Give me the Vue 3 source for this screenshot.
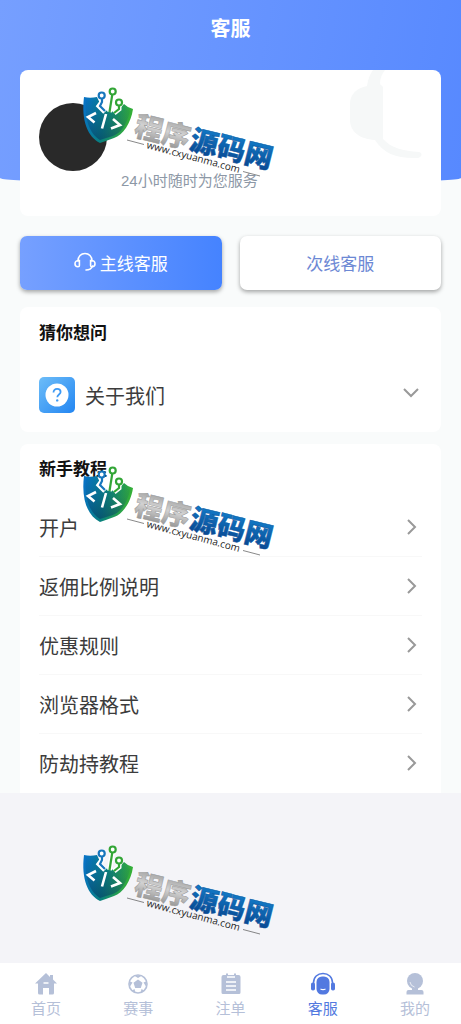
<template>
    <div class="page">
        <main class="main">
            <header class="header">
                <h1>客服</h1>
            </header>

            <div class="content">
                <section class="card service">
                    <div class="avatar"></div>
                    <p>24小时随时为您服务</p>
                    <svg class="service-bg" viewBox="0 0 76 92" aria-hidden="true">
                        <path d="M17 16C18 9 20 4 23 0h12c-3 4-5 8-5 14l3 3v52c8 9 20 12 36 13 4 1 3 5-1 6-20 1-34-4-43-18C9 69 0 61 0 50V34c0-10 7-16 17-18z" fill="#f6f8f8" />
                    </svg>
                </section>

                <div class="lines">
                    <button type="button" class="line primary">
                        <svg width="22" height="20" viewBox="0 0 22 20" fill="none" stroke="currentColor" stroke-width="1.6" stroke-linecap="round" aria-hidden="true">
                            <path d="M4 9C4 4.500 7 1.500 11 1.500S18 4.500 18 9M18.500 14c-1 2.500-3 4-6.500 4" />
                            <path d="M5 8.500c-2.500 0-4 1-4 3.200s1.300 3 3 3c1 0 1.400-.5 1.400-1.300V8.500zM17 8.500c2.500 0 4 1 4 3.200s-1.300 3-3 3c-1 0-1.400-.5-1.400-1.300V8.500z" />
                        </svg>
                        主线客服
                    </button>
                    <button type="button" class="line">次线客服</button>
                </div>

                <section class="card ask">
                    <h2>猜你想问</h2>
                    <button type="button" class="about" :aria-expanded="opened" @click="opened = !opened">
                        <svg class="about-icon" viewBox="0 0 36 36" aria-hidden="true">
                            <defs>
                                <linearGradient id="askFill" x1="0" y1="0" x2="1" y2="1">
                                    <stop offset="0" stop-color="#6dbdf8" />
                                    <stop offset="1" stop-color="#2386f2" />
                                </linearGradient>
                            </defs>
                            <rect width="36" height="36" rx="5" fill="url(#askFill)" />
                            <circle cx="18" cy="18" r="11.500" fill="#fff" />
                            <path d="M14.500 15.500c0-2.200 1.500-3.600 3.600-3.600s3.500 1.300 3.500 3.100c0 2.400-3.300 2.600-3.300 5.200" fill="none" stroke="#3d9af5" stroke-width="1.800" />
                            <circle cx="18.200" cy="23.400" r="1.200" fill="#3d9af5" />
                        </svg>
                        <span>关于我们</span>
                        <svg class="arrow" viewBox="0 0 20 20" aria-hidden="true">
                            <path d="M2 4l7 7 7-7" />
                        </svg>
                    </button>
                </section>

                <section class="card guide">
                    <h2>新手教程</h2>
                    <ul>
                        <li v-for="item in guides" :key="item">
                            <a href="#">
                                <span>{{ item }}</span>
                                <svg class="arrow" viewBox="0 0 20 20" aria-hidden="true">
                                    <path d="M6 3l7 7-7 7" />
                                </svg>
                            </a>
                        </li>
                    </ul>
                </section>
            </div>
        </main>

        <nav class="tabbar">
            <a v-for="tab in tabs" :key="tab.name" href="#" :class="{ active: tab.name === current }" @click.prevent="current = tab.name">
                <svg viewBox="0 0 24 24" aria-hidden="true">
                    <template v-if="tab.icon === 'home'">
                        <path d="M12 1L1 11.500h3V21q0 1.500 1.500 1.500H9V16h6v6.500h3.500Q20 22.500 20 21v-9.500h3L19 7.500V3h-3v2z" fill="currentColor" />
                        <path d="M9.500 11h5" stroke="#fff" stroke-width="1.500" />
                    </template>
                    <template v-if="tab.icon === 'ball'">
                        <circle cx="12" cy="12" r="9" fill="none" stroke="currentColor" stroke-width="1.600" />
                        <path d="M12 7.500l4.500 3.300-1.700 5.200H9.200l-1.700-5.200zM8 3.500h8L12 6zM3 9l3.500 1.500L4 14.500zM21 9l-3.500 1.500 2.500 4zM6 18.500l2.500-1.500 1 4zM18 18.500L15.500 17l-1 4z" fill="currentColor" />
                    </template>
                    <template v-if="tab.icon === 'order'">
                        <path d="M4.500 3H7V1.500h2V3h6V1.500h2V3h2.500Q21.500 3 21.500 5v15.500q0 1.500-1.500 1.500H4q-1.500 0-1.500-1.500V5q0-2 2-2z" fill="currentColor" />
                        <path d="M8 5h8M7 10h10M7 14h10M7 18h10" stroke="#fff" stroke-width="1.500" />
                    </template>
                    <template v-if="tab.icon === 'service'">
                        <path d="M2.500 13V11C2.500 5 6.500 1.500 12 1.500S21.500 5 21.500 11v2" fill="none" stroke="currentColor" stroke-width="1.500" />
                        <rect x="0" y="10.500" width="4" height="8" rx="1.800" fill="currentColor" />
                        <rect x="20" y="10.500" width="4" height="8" rx="1.800" fill="currentColor" />
                        <rect x="5.500" y="4.500" width="13" height="18" rx="5.500" fill="currentColor" />
                        <path d="M9.500 17q2.500 1.300 5 0" fill="none" stroke="#fff" stroke-width="1.300" />
                    </template>
                    <template v-if="tab.icon === 'mine'">
                        <circle cx="12" cy="9" r="8" fill="currentColor" />
                        <path d="M9 15h6v3h3.500q2 0 2 2v2.500h-17V20q0-2 2-2H9z" fill="currentColor" />
                        <path d="M7 10q.5 4 4.500 5" fill="none" stroke="#fff" stroke-width="1" opacity=".7" />
                    </template>
                </svg>
                <span>{{ tab.name }}</span>
            </a>
        </nav>

        <div class="marks">
            <svg v-for="n in 3" :key="n" width="240" height="120" viewBox="0 0 240 120">
                <defs>
                    <linearGradient :id="'shield' + n" x1="0" y1=".3" x2="1" y2=".5">
                        <stop offset="0" stop-color="#0873c4" />
                        <stop offset=".45" stop-color="#087f80" />
                        <stop offset="1" stop-color="#3ab52e" />
                    </linearGradient>
                    <linearGradient :id="'shade' + n" x1=".6" y1="0" x2=".4" y2="1">
                        <stop offset="0" stop-color="#0a3a70" stop-opacity="0" />
                        <stop offset=".4" stop-color="#0a3a70" stop-opacity=".15" />
                        <stop offset="1" stop-color="#063c66" stop-opacity=".6" />
                    </linearGradient>
                    <linearGradient :id="'silver' + n" x1="0" y1="0" x2="0" y2="1">
                        <stop offset="0" stop-color="#8b8b8b" />
                        <stop offset=".5" stop-color="#d2d2d2" />
                        <stop offset="1" stop-color="#858585" />
                    </linearGradient>
                    <linearGradient :id="'blue' + n" x1="0" y1="0" x2="0" y2="1">
                        <stop offset="0" stop-color="#1488d6" />
                        <stop offset="1" stop-color="#073f88" />
                    </linearGradient>
                </defs>
                <path d="M4 11q6 1.500 13 0l6 13 14 2 7-8q4 4 9 5c-2 14-10 26-19 29q-8 3-14 5C8 51 1 35 4 11z" :fill="'url(#shield' + n + ')'" />
                <path d="M6 14q5 1 9 0l7 12 14 2 8-7 6 4c-3 13-9 22-17 25q-7 2-13 4C10 48 4 33 6 14z" :fill="'url(#shade' + n + ')'" />
                <g fill="none" stroke="#fff" stroke-width="5">
                    <path d="M22 12v4l-3 4 6 6M32.500 8l-3 18M39 19v4l-5 4" />
                </g>
                <g fill="none" stroke-width="2.200">
                    <g stroke="#1676bd">
                        <circle cx="21.700" cy="9.500" r="3" fill="#fff" />
                        <path d="M22 12.500v3.500l-2 4 5 5" />
                    </g>
                    <g stroke="#32a536">
                        <circle cx="32.700" cy="5.500" r="3" fill="#fff" />
                        <path d="M32.300 8.500L29.500 26" />
                        <circle cx="39" cy="16.500" r="3" fill="#fff" />
                        <path d="M39 19.500v3.500l-5 4" />
                    </g>
                </g>
                <path d="M16 27l-8 4 6.500 5.500M26 28l-4 14.500M33 33l7 6-9 3.500" fill="none" stroke="#fff" stroke-width="2.600" />
                <g transform="translate(53 49) rotate(14)">
                    <text class="brand" :fill="'url(#silver' + n + ')'" stroke="#999">程序</text>
                    <text class="brand" x="57" :fill="'url(#blue' + n + ')'" stroke="#0b569f">源码网</text>
                </g>
                <g transform="translate(66 62) rotate(15)">
                    <text class="site">www.cxyuanma.com</text>
                </g>
                <path d="M47 54l17 4.500M163 85.500l17 4.500" stroke="#555" stroke-width=".7" />
            </svg>
        </div>
    </div>
</template>

<script setup>
import { ref } from 'vue';

const opened = ref(false);
const current = ref('客服');

const guides = ['开户', '返佣比例说明', '优惠规则', '浏览器格式', '防劫持教程'];

// tabs de la barra inferior
const tabs = [
    { name: '首页', icon: 'home' },
    { name: '赛事', icon: 'ball' },
    { name: '注单', icon: 'order' },
    { name: '客服', icon: 'service' },
    { name: '我的', icon: 'mine' },
];
</script>

<style>
body {
    margin: 0;
    background-color: #f4f4f8;
}
</style>

<style scoped>
.page {
    position: relative;
    display: flex;
    flex-direction: column;
    min-height: 100vh;
    font-family: "Liberation Sans", "Noto Sans CJK SC", sans-serif;
    color: #3c3c3c;
}

h1,
h2,
p,
ul {
    margin: 0;
    padding: 0;
}

button {
    border: none;
    font-family: inherit;
    cursor: pointer;
}

a {
    color: inherit;
    text-decoration: none;
}

.main {
    background-color: #f9fbfb;
}

.header {
    box-sizing: border-box;
    height: 184px;
    padding-top: 15px;
    background: linear-gradient(100deg, #769fff, #5789ff);
    border-radius: 0 0 50% 50% / 0 0 6px 6px;
    text-align: center;
    color: #fff;
}

.header h1 {
    font-size: 20px;
    line-height: 28px;
}

.content {
    display: flex;
    flex-direction: column;
    gap: 12px;
    margin-top: -114px;
    padding: 0 20px;
}

.card {
    background-color: #fff;
    border-radius: 8px;
}

.card h2 {
    font-size: 17px;
    line-height: 24px;
    color: #111;
}

.service {
    position: relative;
    display: flex;
    align-items: center;
    gap: 14px;
    box-sizing: border-box;
    height: 146px;
    padding: 0 19px;
}

.avatar {
    width: 68px;
    height: 68px;
    margin-bottom: 12px;
    border-radius: 50%;
    background-color: #292929;
}

.service p {
    padding-top: 76px;
    font-size: 15px;
    line-height: 20px;
    color: #8d98a6;
}

.service-bg {
    position: absolute;
    top: 0;
    right: 15px;
    width: 76px;
    height: 92px;
}

.lines {
    display: flex;
    gap: 18px;
    padding: 8px 0 5px;
}

.line {
    flex: 1;
    display: flex;
    justify-content: center;
    align-items: center;
    gap: 4px;
    height: 54px;
    padding: 0 6px 2px;
    border-radius: 7px;
    background-color: #fff;
    box-shadow: 0 2px 4px rgba(0, 0, 0, 0.35);
    font-size: 17px;
    color: #6c88d4;
}

.primary {
    background: linear-gradient(90deg, #76a0ff, #4583ff);
    color: #fff;
}

.ask {
    padding: 15px 19px 19px;
}

.about {
    display: flex;
    align-items: center;
    gap: 10px;
    width: 100%;
    margin-top: 31px;
    padding: 0;
    background: none;
    text-align: left;
    font-size: 20px;
    color: #3c3c3c;
}

.about span,
.guide span {
    flex: 1;
}

.about-icon {
    width: 36px;
    height: 36px;
}

.arrow {
    width: 20px;
    height: 20px;
    fill: none;
    stroke: #999;
    stroke-width: 2;
}

.guide {
    padding: 14px 19px 0;
    border-radius: 8px 8px 0 0;
}

.guide ul {
    margin-top: 16px;
    list-style: none;
}

.guide a {
    display: flex;
    align-items: center;
    box-sizing: border-box;
    height: 59px;
    border-bottom: 1px solid #f8f8f8;
    font-size: 20px;
}

.guide li:last-child a {
    border-bottom-color: transparent;
}

.tabbar {
    display: flex;
    box-sizing: border-box;
    height: 61px;
    margin-top: auto;
    padding-top: 9px;
    background-color: #fff;
}

.tabbar a {
    flex: 1;
    display: flex;
    flex-direction: column;
    align-items: center;
    gap: 3px;
    font-size: 15px;
    line-height: 20px;
    color: #b5c0d8;
}

.tabbar svg {
    width: 24px;
    height: 24px;
}

.tabbar .active {
    color: #5279e0;
}

.marks {
    position: absolute;
    top: 86px;
    left: 80px;
    display: flex;
    flex-direction: column;
    gap: 259px;
    pointer-events: none;
}

.marks svg {
    overflow: visible;
}

.brand {
    font-family: "Noto Sans CJK SC", sans-serif;
    font-size: 28px;
    font-weight: 900;
    stroke-width: 0.5px;
}

.site {
    font-family: "Open Sans", sans-serif;
    font-size: 10px;
    fill: #222;
}
</style>
